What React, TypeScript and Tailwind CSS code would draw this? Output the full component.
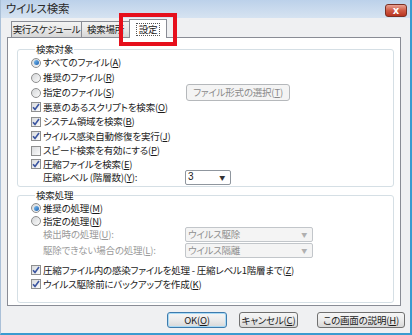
import React from "react";

const jp = "[font-family:'Noto_Sans_CJK_JP','Noto_Sans',sans-serif] [font-feature-settings:'palt'] tracking-[-0.2px]";

const Check = ({ on = true }: { on?: boolean }) => (
  <span className="w-[10px] h-[10px] shrink-0 border border-[#8e8f8f] bg-gradient-to-br from-[#d9dbdd] to-[#fbfbfb] flex items-center justify-center">
    {on && (
      <svg width="8" height="8" viewBox="0 0 8 8">
        <path d="M1 4.2 L3 6.4 L7 1" fill="none" stroke="#3b55a0" strokeWidth="1.6" />
      </svg>
    )}
  </span>
);

const Radio = ({ on = false }: { on?: boolean }) => (
  <span className="w-[10px] h-[10px] shrink-0 rounded-full border border-[#8e8f8f] bg-gradient-to-br from-[#d4d6d8] to-[#fbfbfb] flex items-center justify-center">
    {on && <span className="w-[5px] h-[5px] rounded-full bg-gradient-to-br from-[#7cc0f2] to-[#1a5fae]" />}
  </span>
);

const U = ({ c }: { c: string }) => <span className="underline underline-offset-1">{c}</span>;

const Row = ({ ctl, children, h = "h-[15px]" }: { ctl: React.ReactNode; children: React.ReactNode; h?: string }) => (
  <div className={`flex items-center gap-[2px] ${h}`}>
    {ctl}
    <span className="whitespace-nowrap leading-[11px]">{children}</span>
  </div>
);

const GrayBtn = ({ children, w }: { children: React.ReactNode; w: string }) => (
  <div className={`${w} h-[17px] border border-[#b5b8bb] rounded-[3px] bg-[#f4f4f4] text-[#8a8a8a] flex items-center justify-center whitespace-nowrap leading-[11px]`}>
    {children}
  </div>
);

const DisSelect = ({ label }: { label: string }) => (
  <div className="w-[128px] h-[15px] border border-[#c2c6ca] rounded-[2px] bg-[#f4f4f4] text-[#8f8f8f] flex items-center justify-between pl-[2px] pr-[5px]">
    <span className="leading-[11px]">{label}</span>
    <span className="text-[6px] text-[#b0b0b0]">▼</span>
  </div>
);

const Btn = ({ children, w, def = false }: { children: React.ReactNode; w: string; def?: boolean }) => (
  <div
    className={`${w} h-[16px] rounded-[3px] border ${def ? "border-[#3d7bad] shadow-[inset_0_0_0_1px_#a9daf5]" : "border-[#707070]"} bg-gradient-to-b from-[#f6f6f6] via-[#ebebeb] to-[#d8d8d8] flex items-center justify-center whitespace-nowrap leading-[11px]`}
  >
    {children}
  </div>
);

export default function App() {
  return (
    <div className={`relative w-[412px] h-[335px] overflow-hidden flex flex-col bg-[#eff0f2] border-l border-l-[#aac0d8] border-r-2 border-r-[#3a9bd0] border-b-2 border-b-[#3a9bd0] text-[9.5px] text-[#1a1a1a] ${jp}`}>
      {/* title bar */}
      <div className="h-[18px] shrink-0 flex items-center pl-[5px] pr-[3px] bg-gradient-to-b from-[#bcd1ea] to-[#d6e3f1]">
        <span className="text-[11.5px] text-[#2a2a2a] leading-none">ウイルス検索</span>
        <div className="ml-auto mt-[3px] w-[22px] h-[13px] rounded-[3px] border border-[#7a3024] bg-gradient-to-b from-[#e8a193] via-[#cf5a45] to-[#b8331f] flex items-center justify-center">
          <span className="text-white text-[10px] font-bold leading-none [font-family:'DejaVu_Sans',sans-serif]">x</span>
        </div>
      </div>

      {/* tabs */}
      <div className="h-[19px] shrink-0 flex items-end pl-[10px] text-[9.5px]">
        <div className="w-[71px] h-[16px] border border-b-0 border-[#898c95] bg-gradient-to-b from-[#f3f3f3] via-[#e8e8e8] to-[#d6d6d6] flex items-center justify-center leading-none whitespace-nowrap tracking-[-0.5px]">実行スケジュール</div>
        <div className="w-[48px] h-[16px] border border-l-0 border-b-0 border-[#898c95] bg-gradient-to-b from-[#f3f3f3] via-[#e8e8e8] to-[#d6d6d6] flex items-center justify-center leading-none whitespace-nowrap">検索場所</div>
        <div className="relative z-10 -ml-px -mb-px w-[38px] h-[19px] border border-b-0 border-[#898c95] bg-white flex items-center justify-center">
          <span className="border border-dotted border-[#555] px-[2px] leading-[11px]">設定</span>
        </div>
      </div>

      {/* panel */}
      <div className="ml-[6px] w-[394px] h-[269px] shrink-0 border border-[#898c95] bg-white pt-[5px] pl-[9px] pr-[6px] flex flex-col">
        <fieldset className="border border-[#d5dfe5] rounded-[3px] pl-[13px] pb-[2px]">
          <legend className="ml-[4px] px-[1px] leading-[12px]">検索対象</legend>
          <Row ctl={<Radio on />}>すべてのファイル(<U c="A" />)</Row>
          <Row ctl={<Radio />}>推奨のファイル(<U c="R" />)</Row>
          <div className="flex items-center h-[15px]">
            <div className="w-[155px]">
              <Row ctl={<Radio />}>指定のファイル(<U c="S" />)</Row>
            </div>
            <GrayBtn w="w-[104px]">ファイル形式の選択(<U c="T" />)</GrayBtn>
          </div>
          <Row ctl={<Check />} h="h-[14px]">悪意のあるスクリプトを検索(<U c="O" />)</Row>
          <Row ctl={<Check />}>システム領域を検索(<U c="B" />)</Row>
          <Row ctl={<Check />} h="h-[14px]">ウイルス感染自動修復を実行(<U c="J" />)</Row>
          <Row ctl={<Check on={false} />}>スピード検索を有効にする(<U c="P" />)</Row>
          <Row ctl={<Check />} h="h-[12px]">圧縮ファイルを検索(<U c="E" />)</Row>
          <div className="flex items-center h-[14px] pl-[12px]">
            <span className="w-[142px] whitespace-nowrap leading-[11px]">圧縮レベル (階層数)(<U c="Y" />):</span>
            <div className="w-[46px] h-[15px] border border-[#8f969e] rounded-[2px] bg-white flex items-center justify-between pl-[2px] pr-[5px]">
              <span className="leading-none [font-family:'Liberation_Sans',sans-serif] text-[10px]">3</span>
              <span className="text-[6px] text-[#333]">▼</span>
            </div>
          </div>
        </fieldset>

        <fieldset className="mt-[2px] border border-[#d5dfe5] rounded-[3px] pl-[13px] pb-[11px]">
          <legend className="ml-[4px] px-[1px] leading-[12px]">検索処理</legend>
          <Row ctl={<Radio on />} h="h-[14px]">推奨の処理(<U c="M" />)</Row>
          <div className="flex items-center gap-[2px] h-[11px] pt-[1px]">
            <Radio />
            <span className="whitespace-nowrap leading-[10px]">指定の処理(<U c="N" />)</span>
          </div>
          <div className="flex items-center h-[16px] pl-[12px] text-[#9a9a9a]">
            <span className="w-[142px] whitespace-nowrap leading-[11px]">検出時の処理(<U c="U" />):</span>
            <DisSelect label="ウイルス駆除" />
          </div>
          <div className="flex items-center h-[16px] pl-[12px] text-[#9a9a9a]">
            <span className="w-[142px] whitespace-nowrap leading-[11px]">駆除できない場合の処理(<U c="L" />):</span>
            <DisSelect label="ウイルス隔離" />
          </div>
          <div className="h-[5px]" />
          <Row ctl={<Check />} h="h-[14px]">圧縮ファイル内の感染ファイルを処理 - 圧縮レベル1階層まで(<U c="Z" />)</Row>
          <Row ctl={<Check />} h="h-[14px]">ウイルス駆除前にバックアップを作成(<U c="K" />)</Row>
        </fieldset>
      </div>

      {/* buttons */}
      <div className="mt-[6px] h-[16px] flex items-center pl-[166px]">
        <Btn w="w-[60px]" def>OK(<U c="O" />)</Btn>
        <div className="w-[12px]" />
        <Btn w="w-[59px]">キャンセル(<U c="C" />)</Btn>
        <div className="w-[19px]" />
        <Btn w="w-[88px]">この画面の説明(<U c="H" />)</Btn>
      </div>

      {/* highlight */}
      <div className="absolute left-[118px] top-[13px] w-[58px] h-[33px] border-[4px] border-[#e60f1c]" />
    </div>
  );
}
